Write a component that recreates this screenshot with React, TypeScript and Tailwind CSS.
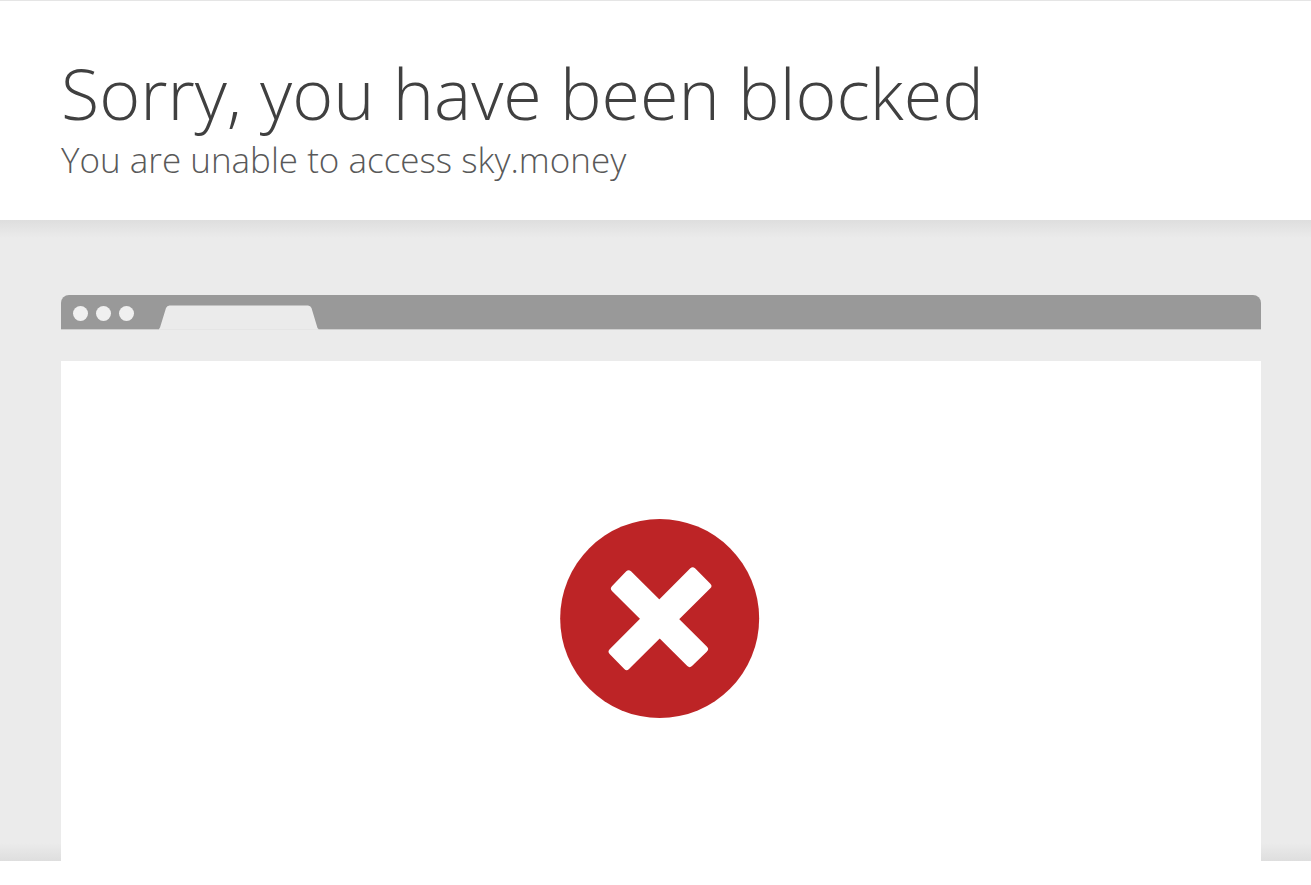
function BrowserBar() {
  return (
    <div className="flex h-[35px] items-start overflow-hidden rounded-t-lg bg-[linear-gradient(to_bottom,#999999_34px,#cfcfcf_34px)]" aria-hidden="true">
      <div className="flex items-center gap-2 pt-[11px] pl-3">
        <span className="size-[15px] rounded-full bg-[#f0f0f0]" />
        <span className="size-[15px] rounded-full bg-[#f0f0f0]" />
        <span className="size-[15px] rounded-full bg-[#f0f0f0]" />
      </div>
      <svg className="mt-[10px] ml-[25px] h-[25px] w-40 shrink-0" viewBox="0 0 160 25">
        <path d="M0 24 L1 22.500 L7 3 Q8 0.500 10.500 0.500 H149 Q151.500 0.500 152.500 3 L158.500 23 L159.500 24 Z" fill="#ebebeb" />
        <path d="M0 24 H159.500 V25 H0 Z" fill="#e5e5e5" />
      </svg>
    </div>
  );
}

function BlockedIcon() {
  return (
    <svg className="size-[200px]" viewBox="30 27 600 600" role="img" aria-label="Blocked">
      <circle cx="329" cy="325.5" r="298.5" fill="#bd2426" />
      <g fill="#fff" stroke="#fff" strokeWidth="20" strokeLinejoin="round">
        <path d="M236 191 L464 417 L419 461 L193 236 Z" />
        <path d="M428 182 L474 228 L230 470 L186 425 Z" />
      </g>
    </svg>
  );
}

export default function App() {
  return (
    <div className="min-h-screen border-t border-[#e5e5e5] bg-white font-['Open_Sans','Noto_Sans',sans-serif] font-light text-[#404040]">
      <header className="pt-[52px] pr-[50px] pb-9 pl-[61px]">
        <h1 className="text-[70px] leading-[80px] font-light">Sorry, you have been blocked</h1>
        <h2 className="mt-[3px] text-[35px] leading-[48px] font-light text-[#595959]">You are unable to access sky.money</h2>
      </header>
      <main className="bg-[#ebebeb] bg-[linear-gradient(to_bottom,#dedede,#ebebeb_18px,#ebebeb_calc(100%-18px),#dedede)] pt-[75px] pr-[50px] pl-[61px]">
        <BrowserBar />
        <div className="mt-[31px] flex h-[500px] justify-center bg-white pt-[158px] pr-[2px]">
          <BlockedIcon />
        </div>
      </main>
    </div>
  );
}
